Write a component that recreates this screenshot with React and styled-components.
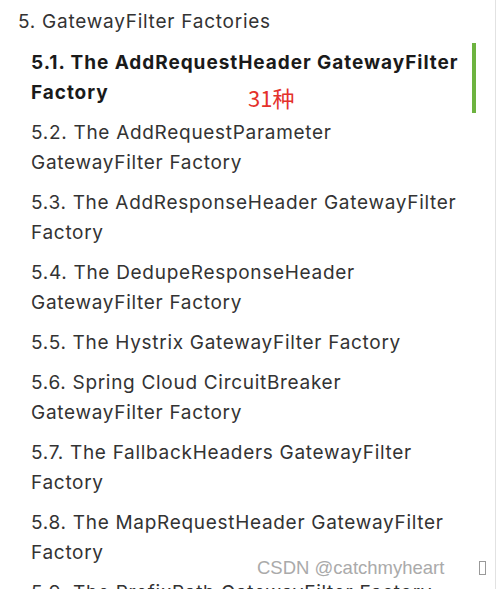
import styled, { createGlobalStyle } from "styled-components";

const Global = createGlobalStyle`
  html, body { margin: 0; padding: 0; background: #fff; }
  body { font-family: Inter, "Open Sans", sans-serif; }
`;

const Panel = styled.div`
  position: relative;
  width: 496px;
  height: 589px;
  border-right: 1px solid #e2e2e2;
  overflow: hidden;
  box-sizing: border-box;
  padding: 7px 0 0 18px;
`;

const Heading = styled.div`
  font-size: 19px;
  letter-spacing: 0.75px;
  line-height: 30px;
  color: #333;
`;

const List = styled.ul`
  list-style: none;
  margin: 6px 0 0 0;
  padding: 0 0 0 13px;
`;

const Item = styled.li`
  position: relative;
  font-size: 19px;
  letter-spacing: ${(p) => (p.$active ? "0.95px" : "0.7px")};
  line-height: 30px;
  color: ${(p) => (p.$active ? "#1a1a1a" : "#333")};
  font-weight: ${(p) => (p.$active ? 700 : 400)};
  padding: 5px 10px 5px 0;
  margin-right: 19px;
  border-right: 4px solid ${(p) => (p.$active ? "#6db33f" : "transparent")};
`;

const Note = styled.span`
  position: absolute;
  left: 217px;
  top: 39px;
  color: #e4312b;
  font-weight: 400;
  font-size: 22px;
  letter-spacing: 0;
  font-family: "Noto Sans CJK SC", sans-serif;
`;

const Watermark = styled.div`
  position: absolute;
  left: 257px;
  top: 557px;
  color: #aaa;
  font-size: 18.5px;
  font-family: "Liberation Sans", Arial, sans-serif;
  display: flex;
  gap: 35px;
  align-items: center;
`;

const Box = styled.span`
  display: inline-block;
  width: 5px;
  height: 12px;
  border: 1px solid #999;
`;

const items = [
  "5.2. The AddRequestParameter GatewayFilter Factory",
  "5.3. The AddResponseHeader GatewayFilter Factory",
  "5.4. The DedupeResponseHeader GatewayFilter Factory",
  "5.5. The Hystrix GatewayFilter Factory",
  "5.6. Spring Cloud CircuitBreaker GatewayFilter Factory",
  "5.7. The FallbackHeaders GatewayFilter Factory",
  "5.8. The MapRequestHeader GatewayFilter Factory",
  "5.9. The PrefixPath GatewayFilter Factory",
];

export default function App() {
  return (
    <>
      <Global />
      <Panel>
        <Heading>5. GatewayFilter Factories</Heading>
        <List>
          <Item $active>
            5.1. The AddRequestHeader GatewayFilter Factory
            <Note>31种</Note>
          </Item>
          {items.map((t) => (
            <Item key={t}>{t}</Item>
          ))}
        </List>
        <Watermark>
          <span>CSDN @catchmyheart</span>
          <Box />
        </Watermark>
      </Panel>
    </>
  );
}
